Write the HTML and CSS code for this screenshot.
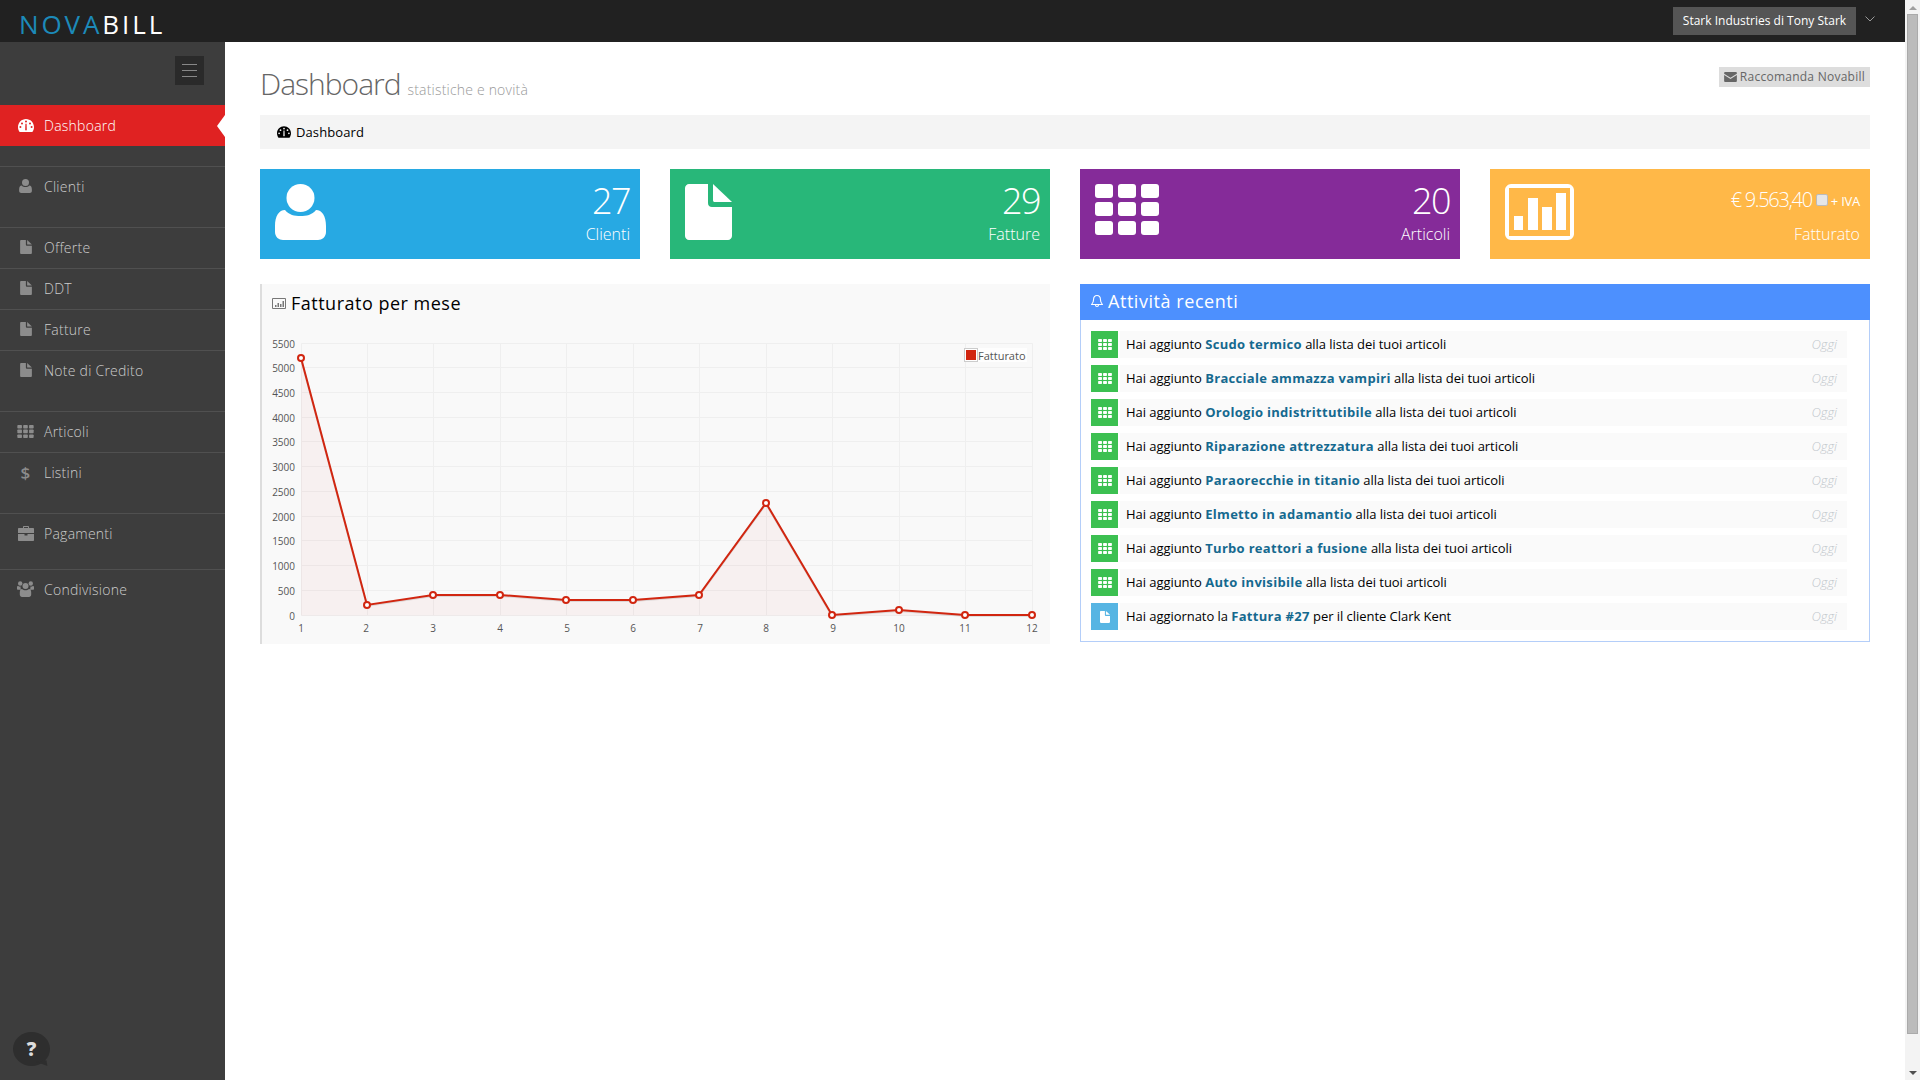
FILE: index.html
```html
<html>

<head>
  <title>Novabill - Dashboard</title>
  <link rel="stylesheet" href="styles.css">
</head>

<body>
  <svg class="icon-defs" width="0" height="0">
    <symbol id="i-dashboard" viewBox="0 0 16 13">
      <path fill-rule="evenodd" d="M8 0C3.6 0 0 3.6 0 8c0 1.9.6 3.6 1.7 5h12.6c1.1-1.4 1.7-3.1 1.7-5 0-4.4-3.6-8-8-8zM7 2.6a1 1 0 1 0 2 0a1 1 0 1 0-2 0zM3 4.4a1 1 0 1 0 2 0a1 1 0 1 0-2 0zM11 4.4a1 1 0 1 0 2 0a1 1 0 1 0-2 0zM1.4 8a1 1 0 1 0 2 0a1 1 0 1 0-2 0zM12.6 8a1 1 0 1 0 2 0a1 1 0 1 0-2 0zM7.2 10.8c0 .8 1.6.8 1.6 0L8.6 4.8H7.4z" />
    </symbol>
    <symbol id="i-user" viewBox="0 0 51 56">
      <circle cx="25.5" cy="14" r="14" />
      <path d="M10 26c4 5 9.500 6 15.500 6s11.500-1 15.500-6c6 0 10 6 10 16v6c0 5-4 8-8 8H8c-4 0-8-3-8-8v-6c0-10 4-16 10-16z" />
    </symbol>
    <symbol id="i-file" viewBox="0 0 47 56">
      <path d="M4 0h19v19c0 2.500 1.500 4 4 4h20v29c0 2-2 4-4 4H4c-2 0-4-2-4-4V4c0-2 2-4 4-4z" />
      <path d="M28 0l19 18H30c-1.500 0-2-.5-2-2z" />
    </symbol>
    <symbol id="i-grid" viewBox="0 0 64 51">
      <rect x="0" y="0" width="18" height="14" rx="3" />
      <rect x="23" y="0" width="18" height="14" rx="3" />
      <rect x="46" y="0" width="18" height="14" rx="3" />
      <rect x="0" y="18" width="18" height="14" rx="3" />
      <rect x="23" y="18" width="18" height="14" rx="3" />
      <rect x="46" y="18" width="18" height="14" rx="3" />
      <rect x="0" y="37" width="18" height="14" rx="3" />
      <rect x="23" y="37" width="18" height="14" rx="3" />
      <rect x="46" y="37" width="18" height="14" rx="3" />
    </symbol>
    <symbol id="i-bars" viewBox="0 0 69 56">
      <path fill-rule="evenodd" d="M6 0h57c3 0 6 3 6 6v44c0 3-3 6-6 6H6c-3 0-6-3-6-6V6c0-3 3-6 6-6zM4 4v48h61V4z" />
      <rect x="9" y="32" width="9" height="14" />
      <rect x="23" y="14" width="10" height="32" />
      <rect x="37" y="23" width="10" height="23" />
      <rect x="51" y="9" width="10" height="37" />
    </symbol>
    <symbol id="i-briefcase" viewBox="0 0 16 15">
      <path fill-rule="evenodd" d="M5 2V1c0-.6.4-1 1-1h4c.6 0 1 .4 1 1v1h4c.6 0 1 .4 1 1v4H0V3c0-.6.4-1 1-1zM6 2h4V1H6z" />
      <path d="M0 8h6.500v1.500h3V8H16v6c0 .6-.4 1-1 1H1c-.6 0-1-.4-1-1z" />
    </symbol>
    <symbol id="i-group" viewBox="0 0 17 16">
      <circle cx="3.200" cy="2.500" r="2.200" />
      <circle cx="13.800" cy="2.500" r="2.200" />
      <circle cx="8.500" cy="5" r="3" />
      <path d="M0 6c0-1 .6-1 1.200-1 .6.500 1.500.8 2.500.6-.3.900-.2 2.200.5 3.200H1c-.6 0-1-.3-1-1zM17 6c0-1-.6-1-1.200-1-.6.500-1.500.8-2.500.6.300.900.2 2.200-.5 3.200H16c.6 0 1-.3 1-1z" />
      <path d="M5 8c1 1 2.200 1.300 3.500 1.300S11 9 12 8c1.500 0 2.200 1.500 2.200 3.500v2c0 1.500-1 2.500-2.200 2.500H5c-1.200 0-2.200-1-2.200-2.500v-2C2.800 9.500 3.500 8 5 8z" />
    </symbol>
    <symbol id="i-mail" viewBox="0 0 14 11">
      <path d="M1 0h12c.6 0 1 .4 1 1v.8L7 6.300 0 1.800V1c0-.6.4-1 1-1z" />
      <path d="M0 3.300l7 4.500 7-4.500V10c0 .6-.4 1-1 1H1c-.6 0-1-.4-1-1z" />
    </symbol>
    <symbol id="i-barsline" viewBox="0 0 14 11">
      <path fill="none" stroke="currentColor" d="M.5.500h13v10H.5z" />
      <path d="M3 7h1.500v2H3zM5.500 5H7v4H5.500zM8 6h1.500v3H8zM10.500 3H12v6h-1.500z" />
    </symbol>
    <symbol id="i-bell" viewBox="0 0 12 14">
      <path fill="none" stroke="currentColor" stroke-width="1.100" d="M6 1.500c-2.300 0-3.400 1.700-3.400 3.700 0 2.800-.8 4-2 5.300h10.800c-1.200-1.300-2-2.500-2-5.300 0-2-1.100-3.700-3.400-3.700zM4.500 11c0 2 3 2 3 0" />
    </symbol>
  </svg>

  <div class="page">
    <header class="top-bar">
      <a href="#" class="brand"><span class="brand-nova">NOVA</span>BILL</a>
      <div class="account">
        <span class="account-name">Stark Industries di Tony Stark</span>
        <svg class="account-caret" width="10" height="6" viewBox="0 0 10 6"><path fill="none" stroke="#999" d="M.5.500L5 5 9.500.500" /></svg>
      </div>
    </header>

    <div class="layout">
      <aside class="sidebar">
        <div class="sidebar-toggler-row">
          <button class="sidebar-toggler"><span></span><span></span><span></span></button>
        </div>
        <nav class="side-nav">
          <a href="#" class="side-link active gap-20">
            <span class="side-icon"><svg width="16" height="13"><use href="#i-dashboard" /></svg></span>Dashboard
          </a>
          <a href="#" class="side-link gap-20">
            <span class="side-icon"><svg width="13" height="14"><use href="#i-user" /></svg></span>Clienti
          </a>
          <a href="#" class="side-link">
            <span class="side-icon"><svg width="12" height="14"><use href="#i-file" /></svg></span>Offerte
          </a>
          <a href="#" class="side-link">
            <span class="side-icon"><svg width="12" height="14"><use href="#i-file" /></svg></span>DDT
          </a>
          <a href="#" class="side-link">
            <span class="side-icon"><svg width="12" height="14"><use href="#i-file" /></svg></span>Fatture
          </a>
          <a href="#" class="side-link gap-20">
            <span class="side-icon"><svg width="12" height="14"><use href="#i-file" /></svg></span>Note di Credito
          </a>
          <a href="#" class="side-link">
            <span class="side-icon"><svg width="17" height="13"><use href="#i-grid" /></svg></span>Articoli
          </a>
          <a href="#" class="side-link gap-20">
            <span class="side-icon dollar">$</span>Listini
          </a>
          <a href="#" class="side-link gap-15">
            <span class="side-icon"><svg width="16" height="15"><use href="#i-briefcase" /></svg></span>Pagamenti
          </a>
          <a href="#" class="side-link">
            <span class="side-icon"><svg width="17" height="16"><use href="#i-group" /></svg></span>Condivisione
          </a>
        </nav>
        <div class="help-bubble">?</div>
      </aside>

      <main class="content">
        <div class="page-head">
          <h1 class="page-title">Dashboard <small>statistiche e novità</small></h1>
          <a href="#" class="recommend"><svg width="13" height="10"><use href="#i-mail" /></svg> Raccomanda Novabill</a>
        </div>

        <div class="breadcrumb"><svg width="14" height="12"><use href="#i-dashboard" /></svg> Dashboard</div>

        <section class="stats">
          <div class="stat blue">
            <svg class="stat-icon" width="51" height="56"><use href="#i-user" /></svg>
            <div class="stat-details">
              <div class="stat-number">27</div>
              <div class="stat-desc">Clienti</div>
            </div>
          </div>
          <div class="stat green">
            <svg class="stat-icon" width="47" height="56"><use href="#i-file" /></svg>
            <div class="stat-details">
              <div class="stat-number">29</div>
              <div class="stat-desc">Fatture</div>
            </div>
          </div>
          <div class="stat purple">
            <svg class="stat-icon" width="64" height="51"><use href="#i-grid" /></svg>
            <div class="stat-details">
              <div class="stat-number">20</div>
              <div class="stat-desc">Articoli</div>
            </div>
          </div>
          <div class="stat orange">
            <svg class="stat-icon" width="69" height="56"><use href="#i-bars" /></svg>
            <div class="stat-details">
              <div class="stat-number money">€ 9.563,40 <input type="checkbox" class="vat-check"> <span class="vat">+ IVA</span></div>
              <div class="stat-desc">Fatturato</div>
            </div>
          </div>
        </section>

        <section class="panels">
          <div class="chart-panel">
            <h3 class="chart-title"><svg width="14" height="11"><use href="#i-barsline" /></svg> Fatturato per mese</h3>
            <svg class="chart" width="788" height="320" viewBox="262 324 788 320">
              <g class="grid-lines">
                <path d="M301.500 343.500H1032.500M301.500 367.500H1032.500M301.500 392.500H1032.500M301.500 417.500H1032.500M301.500 441.500H1032.500M301.500 466.500H1032.500M301.500 491.500H1032.500M301.500 516.500H1032.500M301.500 540.500H1032.500M301.500 565.500H1032.500M301.500 590.500H1032.500M301.500 615.500H1032.500" />
                <path d="M301.500 343.500V615.500M367.500 343.500V615.500M433.500 343.500V615.500M500.500 343.500V615.500M566.500 343.500V615.500M633.500 343.500V615.500M699.500 343.500V615.500M766.500 343.500V615.500M832.500 343.500V615.500M899.500 343.500V615.500M965.500 343.500V615.500M1032.500 343.500V615.500" />
              </g>
              <path class="chart-area" d="M301 358L367 605 433 595 500 595 566 600 633 600 699 595 766 503 832 615 899 610 965 615 1032 615V615.500H301z" />
              <polyline class="chart-shadow" points="301,359 367,606 433,596 500,596 566,601 633,601 699,596 766,504 832,616 899,611 965,616 1032,616" />
              <polyline class="chart-line" points="301,358 367,605 433,595 500,595 566,600 633,600 699,595 766,503 832,615 899,610 965,615 1032,615" />
              <g class="chart-points">
                <circle cx="301" cy="358" r="3" />
                <circle cx="367" cy="605" r="3" />
                <circle cx="433" cy="595" r="3" />
                <circle cx="500" cy="595" r="3" />
                <circle cx="566" cy="600" r="3" />
                <circle cx="633" cy="600" r="3" />
                <circle cx="699" cy="595" r="3" />
                <circle cx="766" cy="503" r="3" />
                <circle cx="832" cy="615" r="3" />
                <circle cx="899" cy="610" r="3" />
                <circle cx="965" cy="615" r="3" />
                <circle cx="1032" cy="615" r="3" />
              </g>
              <g class="y-labels">
                <text x="295" y="348">5500</text>
                <text x="295" y="372">5000</text>
                <text x="295" y="397">4500</text>
                <text x="295" y="422">4000</text>
                <text x="295" y="446">3500</text>
                <text x="295" y="471">3000</text>
                <text x="295" y="496">2500</text>
                <text x="295" y="521">2000</text>
                <text x="295" y="545">1500</text>
                <text x="295" y="570">1000</text>
                <text x="295" y="595">500</text>
                <text x="295" y="620">0</text>
              </g>
              <g class="x-labels">
                <text x="301" y="632">1</text>
                <text x="366" y="632">2</text>
                <text x="433" y="632">3</text>
                <text x="500" y="632">4</text>
                <text x="567" y="632">5</text>
                <text x="633" y="632">6</text>
                <text x="700" y="632">7</text>
                <text x="766" y="632">8</text>
                <text x="833" y="632">9</text>
                <text x="899" y="632">10</text>
                <text x="965" y="632">11</text>
                <text x="1032" y="632">12</text>
              </g>
              <rect class="legend-bg" x="964" y="348" width="63" height="14" />
              <rect class="legend-box" x="964.500" y="348.500" width="13" height="13" />
              <rect class="legend-swatch" x="966" y="350" width="10" height="10" />
              <text class="legend-label" x="978" y="360">Fatturato</text>
            </svg>
          </div>

          <div class="feed-panel">
            <h3 class="feed-title"><svg width="12" height="14"><use href="#i-bell" /></svg> Attività recenti</h3>
            <ul class="feed">
              <li class="feed-row">
                <span class="feed-badge"><svg width="14" height="11"><use href="#i-grid" /></svg></span>
                <span class="feed-text">Hai aggiunto <a href="#">Scudo termico</a> alla lista dei tuoi articoli</span>
                <span class="feed-date">Oggi</span>
              </li>
              <li class="feed-row">
                <span class="feed-badge"><svg width="14" height="11"><use href="#i-grid" /></svg></span>
                <span class="feed-text">Hai aggiunto <a href="#">Bracciale ammazza vampiri</a> alla lista dei tuoi articoli</span>
                <span class="feed-date">Oggi</span>
              </li>
              <li class="feed-row">
                <span class="feed-badge"><svg width="14" height="11"><use href="#i-grid" /></svg></span>
                <span class="feed-text">Hai aggiunto <a href="#">Orologio indistrittutibile</a> alla lista dei tuoi articoli</span>
                <span class="feed-date">Oggi</span>
              </li>
              <li class="feed-row">
                <span class="feed-badge"><svg width="14" height="11"><use href="#i-grid" /></svg></span>
                <span class="feed-text">Hai aggiunto <a href="#">Riparazione attrezzatura</a> alla lista dei tuoi articoli</span>
                <span class="feed-date">Oggi</span>
              </li>
              <li class="feed-row">
                <span class="feed-badge"><svg width="14" height="11"><use href="#i-grid" /></svg></span>
                <span class="feed-text">Hai aggiunto <a href="#">Paraorecchie in titanio</a> alla lista dei tuoi articoli</span>
                <span class="feed-date">Oggi</span>
              </li>
              <li class="feed-row">
                <span class="feed-badge"><svg width="14" height="11"><use href="#i-grid" /></svg></span>
                <span class="feed-text">Hai aggiunto <a href="#">Elmetto in adamantio</a> alla lista dei tuoi articoli</span>
                <span class="feed-date">Oggi</span>
              </li>
              <li class="feed-row">
                <span class="feed-badge"><svg width="14" height="11"><use href="#i-grid" /></svg></span>
                <span class="feed-text">Hai aggiunto <a href="#">Turbo reattori a fusione</a> alla lista dei tuoi articoli</span>
                <span class="feed-date">Oggi</span>
              </li>
              <li class="feed-row">
                <span class="feed-badge"><svg width="14" height="11"><use href="#i-grid" /></svg></span>
                <span class="feed-text">Hai aggiunto <a href="#">Auto invisibile</a> alla lista dei tuoi articoli</span>
                <span class="feed-date">Oggi</span>
              </li>
              <li class="feed-row">
                <span class="feed-badge info"><svg width="10" height="12"><use href="#i-file" /></svg></span>
                <span class="feed-text">Hai aggiornato la <a href="#">Fattura #27</a> per il cliente Clark Kent</span>
                <span class="feed-date">Oggi</span>
              </li>
            </ul>
          </div>
        </section>
      </main>
    </div>
  </div>

  <div class="scrollbar">
    <span class="scroll-arrow up"></span>
    <span class="scroll-thumb"></span>
    <span class="scroll-arrow down"></span>
  </div>
</body>

</html>
```

FILE: styles.css
```css
* {
  box-sizing: border-box;
}

html,
body {
  height: 100%;
}

body {
  margin: 0;
  display: flex;
  overflow: hidden;
  background-color: #fff;
  color: #000;
  font-family: "Open Sans", sans-serif;
  font-size: 13px;
}

svg {
  fill: currentColor;
}

.icon-defs {
  position: absolute;
}

.page {
  flex-grow: 1;
  display: flex;
  flex-direction: column;
  min-width: 0;
}

.top-bar {
  flex: 0 0 42px;
  display: flex;
  justify-content: space-between;
  background-color: #212121;
  padding-left: 19px;
}

.brand {
  color: #fff;
  font-size: 26px;
  font-weight: 500;
  line-height: 48px;
  height: 42px;
  letter-spacing: 2.9px;
  text-decoration: none;
}

.brand-nova {
  color: #1c8ab9;
}

.account {
  display: flex;
  padding-top: 7px;
  padding-right: 30px;
}

.account-name {
  width: 183px;
  height: 28px;
  background-color: #555;
  color: #fff;
  font-size: 12px;
  line-height: 28px;
  text-align: center;
}

.account-caret {
  margin-left: 9px;
  margin-top: 9px;
}

.layout {
  flex-grow: 1;
  display: flex;
  min-height: 0;
}

.sidebar {
  position: relative;
  flex: 0 0 225px;
  background-color: #3d3d3d;
}

.sidebar-toggler-row {
  display: flex;
  justify-content: flex-end;
  height: 63px;
  padding: 14px 21px 0 0;
}

.sidebar-toggler {
  display: flex;
  flex-direction: column;
  justify-content: center;
  gap: 5px;
  width: 29px;
  height: 29px;
  padding: 0 7px;
  border: 0;
  background-color: #2a2a2a;
}

.sidebar-toggler span {
  height: 1px;
  background-color: #888;
}

.side-link {
  position: relative;
  display: flex;
  align-items: center;
  height: 41px;
  padding-left: 17px;
  padding-bottom: 2px;
  border-top: 1px solid #505050;
  color: #ccc;
  font-size: 14px;
  font-weight: 300;
  letter-spacing: 0.25px;
  text-decoration: none;
}

.side-link.gap-20 {
  margin-bottom: 20px;
}

.side-link.gap-15 {
  margin-bottom: 15px;
}

.side-link.active {
  padding-bottom: 0;
  border-top: 0;
  background-color: #e02222;
  color: #fff;
}

.side-link.active::after {
  content: "";
  position: absolute;
  right: 0;
  top: 10px;
  border-top: 11px solid transparent;
  border-bottom: 11px solid transparent;
  border-right: 8px solid #fff;
}

.side-icon {
  display: flex;
  justify-content: center;
  width: 17px;
  margin-right: 10px;
  color: #8c8c8c;
}

.side-link.active .side-icon {
  color: #fff;
}

.dollar {
  font-size: 17px;
  font-weight: 600;
  line-height: 1;
}

.help-bubble {
  position: absolute;
  left: 13px;
  bottom: 14px;
  width: 37px;
  height: 34px;
  border-radius: 50%;
  background-color: #2e2e2e;
  color: #ddd;
  font-size: 19px;
  font-weight: 800;
  line-height: 34px;
  text-align: center;
}

.help-bubble::after {
  content: "";
  position: absolute;
  left: 24px;
  top: 29px;
  border-top: 6px solid #2e2e2e;
  border-left: 10px solid transparent;
  transform: rotate(-10deg);
}

.content {
  flex-grow: 1;
  min-width: 0;
  padding: 0 35px;
}

.page-head {
  display: flex;
  justify-content: space-between;
  align-items: flex-start;
  height: 73px;
  padding-top: 25px;
}

.page-title {
  margin: 1px 0 0;
  color: #666;
  font-size: 30px;
  font-weight: 300;
  line-height: 32px;
  letter-spacing: -1px;
}

.page-title small {
  color: #999;
  font-size: 14px;
  font-weight: 300;
  letter-spacing: 0.2px;
}

.recommend {
  display: flex;
  align-items: center;
  gap: 3px;
  height: 20px;
  padding: 0 5px 1px;
  background-color: #ddd;
  color: #666;
  font-size: 12px;
  letter-spacing: 0.25px;
  text-decoration: none;
}

.breadcrumb {
  display: flex;
  align-items: center;
  gap: 5px;
  height: 34px;
  padding-left: 17px;
  background-color: #f4f4f4;
  letter-spacing: 0.1px;
}

.stats {
  display: grid;
  grid-template-columns: repeat(4, 1fr);
  gap: 30px;
  margin-top: 20px;
}

.stat {
  display: flex;
  justify-content: space-between;
  height: 90px;
  padding: 15px 10px 0 15px;
  color: #fff;
  font-weight: 300;
  text-align: right;
}

.stat.blue {
  background-color: #27a9e3;
}

.stat.green {
  background-color: #28b779;
}

.stat.purple {
  background-color: #852b99;
}

.stat.orange {
  background-color: #ffb848;
}

.stat-details {
  margin-top: -1px;
}

.stat-number {
  font-size: 36px;
  line-height: 36px;
  letter-spacing: -1.5px;
}

.stat-number.money {
  display: flex;
  align-items: center;
  gap: 3px;
  height: 34px;
  font-size: 20px;
  letter-spacing: -1.3px;
}

.vat {
  margin-top: 2px;
  font-size: 13px;
  font-weight: 400;
  letter-spacing: -0.25px;
}

.vat-check {
  appearance: none;
  width: 12px;
  height: 12px;
  margin: 0 0 0 1px;
  border: 1px solid #bbb;
  border-radius: 2px;
  background-color: #e6e6e6;
}

.stat-desc {
  margin-top: 4px;
  font-size: 16px;
  line-height: 22px;
}

.money + .stat-desc {
  margin-top: 6px;
}

.panels {
  display: grid;
  grid-template-columns: 1fr 1fr;
  gap: 30px;
  align-items: start;
  margin-top: 25px;
}

.chart-panel {
  height: 360px;
  border-left: 2px solid #ddd;
  background-color: #f9f9f9;
}

.chart-title {
  display: flex;
  align-items: center;
  gap: 5px;
  height: 40px;
  margin: 0;
  padding: 0 0 2px 10px;
  font-size: 18px;
  font-weight: 400;
  letter-spacing: 0.5px;
}

.chart-title svg {
  color: #777;
}

.chart {
  display: block;
}

.grid-lines path {
  fill: none;
  stroke: #efefef;
  stroke-width: 1;
}

.chart-area {
  fill: rgba(209, 38, 16, 0.04);
  stroke: none;
}

.chart-shadow {
  fill: none;
  stroke: rgba(0, 0, 0, 0.1);
  stroke-width: 2;
}

.chart-line {
  fill: none;
  stroke: #d12610;
  stroke-width: 2;
}

.chart-points circle {
  fill: #fff;
  stroke: #d12610;
  stroke-width: 2;
}

.y-labels text,
.x-labels text,
.legend-label {
  fill: #555;
  font-size: 10px;
}

.legend-label {
  font-size: 11px;
}

.y-labels text {
  text-anchor: end;
}

.x-labels text {
  text-anchor: middle;
}

.legend-bg {
  fill: #fff;
  opacity: 0.85;
}

.legend-box {
  fill: #fff;
  stroke: #ccc;
}

.legend-swatch {
  fill: #d12610;
}

.feed-panel {
  height: 358px;
  border: 1px solid #b4cef9;
  border-top: 0;
}

.feed-title {
  display: flex;
  align-items: center;
  gap: 5px;
  height: 36px;
  margin: 0 -1px 0 -1px;
  padding: 0 0 2px 11px;
  background-color: #4d90fe;
  color: #fff;
  font-size: 18px;
  font-weight: 400;
  letter-spacing: 0.55px;
}

.feed {
  margin: 11px 0 0;
  padding: 0 22px 0 10px;
  list-style: none;
}

.feed-row {
  display: flex;
  align-items: center;
  height: 27px;
  margin-bottom: 7px;
  background-color: #fafafa;
}

.feed-badge {
  display: flex;
  align-items: center;
  justify-content: center;
  flex: 0 0 29px;
  height: 27px;
  border-right: 2px solid #fff;
  background-color: #3cc051;
  color: #fff;
}

.feed-badge.info {
  background-color: #57b5e3;
}

.feed-text {
  flex-grow: 1;
  margin-bottom: 2px;
  padding-left: 6px;
  letter-spacing: -0.05px;
}

.feed-text a {
  color: #15698f;
  font-weight: 700;
  letter-spacing: 0.3px;
  text-decoration: none;
}

.feed-date {
  margin-bottom: 2px;
  padding-right: 10px;
  color: #bfc6cb;
  font-weight: 300;
  font-style: italic;
}

.scrollbar {
  flex: 0 0 15px;
  display: flex;
  flex-direction: column;
  align-items: center;
  padding: 6px 0 5px;
  background-color: #f3f3f3;
}

.scroll-arrow {
  border-left: 4px solid transparent;
  border-right: 4px solid transparent;
}

.scroll-arrow.up {
  border-bottom: 4px solid #a0a0a0;
}

.scroll-arrow.down {
  margin-top: auto;
  border-top: 4px solid #505050;
}

.scroll-thumb {
  width: 11px;
  height: 1020px;
  margin-top: 4px;
  background-color: #bbb;
  border: 1px solid #aaa;
}
```
